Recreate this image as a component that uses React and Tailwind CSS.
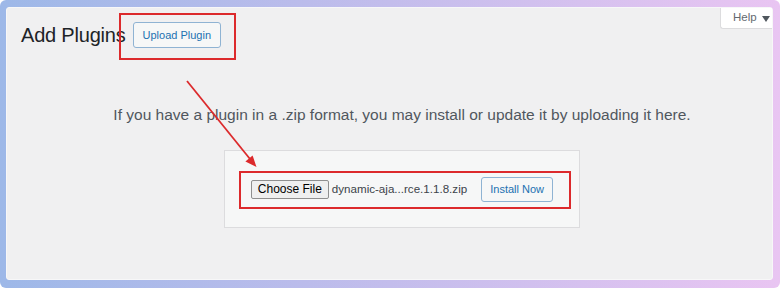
export default function App() {
  return (
    <div className="relative w-[780px] h-[290px] bg-white font-['Liberation_Sans',Arial,sans-serif]">
      <div className="h-[288px] rounded-[6px] bg-linear-to-r from-[#9db8e8] via-[#c3bdec] to-[#e9c5f2] pt-[7px] pl-[6px] pr-[7px] pb-[8px]">
        <div className="h-full rounded-[3px] border border-[#f7f7f8] bg-[#f0f0f1]">
          {/* help tab */}
          <div className="float-right flex h-[21px] w-[52px] items-center gap-[5px] rounded-bl-[3px] border-b border-l border-[#dcdcde] bg-white pl-[12px]">
            <span className="text-[11.5px] leading-none text-[#646970]">Help</span>
            <svg width="8" height="6" viewBox="0 0 8 6" className="mt-[1px]">
              <path d="M0 0 L8 0 L4 6 Z" fill="#50575e" />
            </svg>
          </div>

          <div className="mt-[14px] flex h-[26px] items-center gap-[7px] pl-[14px]">
            <h1 className="text-[20px] font-normal leading-none tracking-[-0.2px] text-[#1d2327]">Add Plugins</h1>
            <div className="relative">
              <button className="h-[26px] rounded-[3px] border border-[#8fb3d3] bg-[#f6f7f7] px-[9px] text-[11px] leading-none text-[#2271b1]">
                Upload Plugin
              </button>
              <div className="pointer-events-none absolute -left-[14px] -right-[15px] -top-[9px] -bottom-[12px] border-2 border-[#dc2a2c]" />
            </div>
          </div>

          <div className="flex flex-col items-center pl-[25px]">
            <p className="mt-[55px] h-[24px] text-[15.5px] leading-[24px] text-[#50575e]">
              If you have a plugin in a .zip format, you may install or update it by uploading it here.
            </p>
            <div className="mt-[23px] flex h-[78px] w-[356px] items-center justify-center border border-[#dcdcde] bg-[#f6f7f7]">
              <div className="relative flex items-center">
                <button className="h-[19px] w-[78px] rounded-[2px] border border-[#8f8f8f] bg-[#efefef] text-[12px] leading-none text-black">
                  Choose File
                </button>
                <span className="ml-[3px] text-[11.6px] text-[#3c434a]">dynamic-aja...rce.1.1.8.zip</span>
                <button className="ml-[14px] h-[25px] w-[72px] rounded-[3px] border border-[#8fb3d3] bg-[#f6f7f7] text-[11px] leading-none text-[#2271b1]">
                  Install Now
                </button>
                <div className="pointer-events-none absolute -left-[12px] -right-[18px] -top-[6px] -bottom-[7px] border-2 border-[#dc2a2c]" />
              </div>
            </div>
          </div>
        </div>
      </div>

      {/* annotation arrow */}
      <svg className="pointer-events-none absolute left-0 top-0" width="780" height="290">
        <line x1="187" y1="81" x2="250" y2="159" stroke="#dc2a2c" strokeWidth="1.8" />
        <path d="M256.5 167 L245.4 161.4 L252.6 155.6 Z" fill="#dc2a2c" />
      </svg>
    </div>
  );
}
